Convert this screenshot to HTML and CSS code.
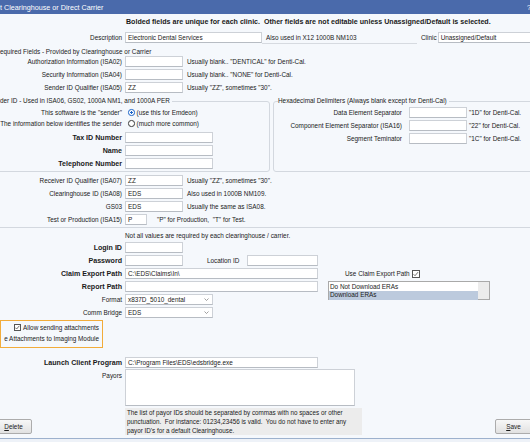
FILE: index.html
```html
<!DOCTYPE html>
<html>
<head>
<meta charset="utf-8">
<link rel="stylesheet" href="styles.css">
</head>
<body>
<div class="dlg">
  <div class="titlebar"><span class="title">t Clearinghouse or Direct Carrier</span><span class="help">?</span></div>

  <div class="headline">Bolded fields are unique for each clinic.&nbsp; Other fields are not editable unless Unassigned/Default is selected.</div>

  <div class="row desc-row">
    <span class="lbl">Description</span>
    <span class="tb w137">Electronic Dental Services</span>
    <span class="also">Also used in X12 1000B NM103</span>
    <span class="clinic-lbl">Clinic</span>
    <span class="tb clinic">Unassigned/Default</span>
  </div>

  <div class="group req">
    <div class="gtitle">equired Fields - Provided by Clearinghouse or Carrier</div>
    <div class="row"><span class="lbl">Authorization Information (ISA02)</span><span class="tb w58"></span><span class="note">Usually blank.. "DENTICAL" for Denti-Cal.</span></div>
    <div class="row"><span class="lbl">Security Information (ISA04)</span><span class="tb w58"></span><span class="note">Usually blank.. "NONE" for Denti-Cal.</span></div>
    <div class="row"><span class="lbl">Sender ID Qualifier (ISA05)</span><span class="tb w58">ZZ</span><span class="note">Usually "ZZ", sometimes "30".</span></div>

    <div class="subgroups">
      <div class="group sender">
        <div class="gtitle">der ID - Used in ISA06, GS02, 1000A NM1, and 1000A PER</div>
        <div class="row r11 first"><span class="lbl">This software is the "sender"</span><span class="radio on"></span><span class="rtext">(use this for Emdeon)</span></div>
        <div class="row r11"><span class="lbl">The information below identifies the sender</span><span class="radio"></span><span class="rtext">(much more common)</span></div>
        <div class="row gap2"><span class="lbl b">Tax ID Number</span><span class="tb w88"></span></div>
        <div class="row"><span class="lbl b">Name</span><span class="tb w88"></span></div>
        <div class="row"><span class="lbl b">Telephone Number</span><span class="tb w88"></span></div>
      </div>
      <div class="group hex">
        <div class="gtitle hextitle">Hexadecimal Delimiters (Always blank except for Denti-Cal)</div>
        <div class="row"><span class="hlbl">Data Element Separator</span><span class="tb w58"></span><span class="hnote">"1D" for Denti-Cal.</span></div>
        <div class="row"><span class="hlbl">Component Element Separator (ISA16)</span><span class="tb w58"></span><span class="hnote">"22" for Denti-Cal.</span></div>
        <div class="row"><span class="hlbl">Segment Teminator</span><span class="tb w58"></span><span class="hnote">"1C" for Denti-Cal.</span></div>
      </div>
    </div>

    <div class="row gap2"><span class="lbl">Receiver ID Qualifier (ISA07)</span><span class="tb w58">ZZ</span><span class="note">Usually "ZZ", sometimes "30".</span></div>
    <div class="row"><span class="lbl">Clearinghouse ID (ISA08)</span><span class="tb w58">EDS</span><span class="note">Also used in 1000B NM109.</span></div>
    <div class="row"><span class="lbl">GS03</span><span class="tb w58">EDS</span><span class="note">Usually the same as ISA08.</span></div>
    <div class="row"><span class="lbl">Test or Production (ISA15)</span><span class="tb w22">P</span><span class="note wide">"P" for Production,&nbsp; "T" for Test.</span></div>
  </div>

  <div class="hint">Not all values are required by each clearinghouse / carrier.</div>

  <div class="conn">
    <div class="conn-left">
      <div class="row"><span class="lbl b">Login ID</span><span class="tb w58"></span></div>
      <div class="row"><span class="lbl b">Password</span><span class="tb w58"></span><span class="loc-lbl">Location ID</span><span class="tb w71"></span></div>
      <div class="row"><span class="lbl b">Claim Export Path</span><span class="tb w193">C:\EDS\Claims\In\</span></div>
      <div class="row"><span class="lbl b">Report Path</span><span class="tb w193"></span></div>
      <div class="row"><span class="lbl">Format</span><span class="tb combo w88"><span class="ctext">x837D_5010_dental</span><svg class="chev" width="5" height="3" viewBox="0 0 5 3"><polyline points="0.5,0.5 2.5,2.5 4.5,0.5" fill="none" stroke="#777" stroke-width="0.7"/></svg></span></div>
      <div class="row"><span class="lbl">Comm Bridge</span><span class="tb combo w88"><span class="ctext">EDS</span><svg class="chev" width="5" height="3" viewBox="0 0 5 3"><polyline points="0.5,0.5 2.5,2.5 4.5,0.5" fill="none" stroke="#777" stroke-width="0.7"/></svg></span></div>
    </div>
    <div class="conn-right">
      <div class="row usepath"><span>Use Claim Export Path</span><span class="chk"><svg width="8" height="8" viewBox="0 0 8 8"><polyline points="1.6,4.2 3.2,5.8 6.4,2" fill="none" stroke="#444" stroke-width="0.8"/></svg></span></div>
      <div class="listbox">
        <div class="items">
          <div class="item">Do Not Download ERAs</div>
          <div class="item sel">Download ERAs</div>
        </div>
        <div class="lscroll"></div>
      </div>
    </div>
  </div>

  <div class="attach">
    <div class="aline"><span class="chk small"><svg width="7" height="7" viewBox="0 0 7 7"><polyline points="1.3,3.6 2.8,5.1 5.7,1.7" fill="none" stroke="#444" stroke-width="0.8"/></svg></span><span>Allow sending attachments</span></div>
    <div class="aline second">e Attachments to Imaging Module</div>
  </div>

  <div class="row launch"><span class="lbl b">Launch Client Program</span><span class="tb w193">C:\Program Files\EDS\edsbridge.exe</span></div>

  <div class="bottom">
    <div class="bcol1">
      <div class="payors-lbl">Payors</div>
      <div class="btn delete"><u>D</u>elete</div>
    </div>
    <div class="bcol2">
      <div class="ta"></div>
      <div class="pnote">The list of payor IDs should be separated by commas with no spaces or other punctuation.&nbsp; For instance: 01234,23456 is valid.&nbsp; You do not have to enter any payor ID's for a default Clearinghouse.</div>
    </div>
    <div class="bspacer"></div>
    <div class="btn save"><u>S</u>ave</div>
  </div>

  <div class="footer"></div>
</div>
</body>
</html>
```

FILE: styles.css
```css
* { box-sizing: border-box; }
html, body { margin: 0; padding: 0; }
body {
  background: #f5f8fc;
  font-family: "Liberation Sans", Arial, sans-serif;
  font-size: 6.4px;
  color: #1a1a1a;
}
.dlg {
  width: 530px;
  height: 442px;
  overflow: hidden;
  display: flex;
  flex-direction: column;
  background: #f5f8fc;
}
.titlebar {
  flex: none;
  height: 14px;
  background: #4a6aab;
  color: #fff;
  font-size: 7.2px;
  display: flex;
  align-items: center;
  justify-content: space-between;
  white-space: nowrap;
}
.help { margin-right: -1px; }
.headline {
  flex: none;
  margin-top: 2px;
  height: 12px;
  line-height: 12px;
  padding-left: 126px;
  font-weight: bold;
  font-size: 7.1px;
  white-space: nowrap;
}
.row {
  display: flex;
  align-items: center;
  height: 13px;
  white-space: nowrap;
  flex: none;
}
.row.r11 { height: 11px; }
.row.first { margin-top: 1px; }
.row.gap2 { margin-top: 2px; }
.lbl {
  flex: none;
  width: 122px;
  margin-right: 3px;
  display: flex;
  justify-content: flex-end;
}
.b { font-weight: bold; font-size: 7.1px; }
.tb {
  flex: none;
  height: 11px;
  background: #fff;
  border: 1px solid #cdd1d7;
  border-bottom-color: #b7bcc3;
  padding: 0 2px;
  display: flex;
  align-items: center;
  overflow: hidden;
  font-size: 6.4px;
  font-weight: normal;
}
.w22 { width: 22px; }
.w58 { width: 58px; }
.w71 { width: 71px; }
.w88 { width: 88px; }
.w137 { width: 137px; }
.w193 { width: 193px; }
.note { margin-left: 4px; }
.note.wide { margin-left: 10px; }

.desc-row { margin-top: 3px; }
.also {
  flex: none;
  width: 155px;
  height: 12px;
  padding-left: 4px;
  margin-top: 1px;
  border-bottom: 1px solid #d6dae0;
  display: flex;
  align-items: center;
}
.clinic-lbl { margin-left: 4px; margin-right: 1px; }
.clinic { width: 100px; }

.group {
  border: 1px solid #d3d8df;
  border-radius: 3px;
}
.gtitle {
  width: max-content;
  height: 10px;
  line-height: 10px;
  margin-top: -6px;
  background: #f5f8fc;
  padding-right: 2px;
  white-space: nowrap;
}
.req {
  flex: none;
  margin: 8px -20px 0 -20px;
  padding: 0 0 1px 19px;
  border-top-color: transparent;
}
.req > .gtitle { margin-bottom: -2px; background: transparent; }

.subgroups {
  display: flex;
  align-items: stretch;
  margin-top: 7px;
}
.sender {
  flex: none;
  margin-left: -20px;
  width: 290px;
  padding: 0 0 1px 19px;
}
.hex {
  flex: 1;
  margin-left: 3px;
  padding-bottom: 1px;
}
.hextitle { margin-left: 4px; padding-left: 0; }
.hlbl {
  flex: none;
  width: 128px;
  margin-right: 7px;
  display: flex;
  justify-content: flex-end;
}
.hnote { margin-left: 2px; }

.radio {
  flex: none;
  width: 6.5px;
  height: 6.5px;
  margin-left: 3px;
  border-radius: 50%;
  border: 0.8px solid #3a3a3a;
  background: #fff;
}
.radio.on {
  border: 1.6px solid #1c64c8;
  background: radial-gradient(circle, #1c64c8 0 1.2px, #fff 1.4px);
}
.rtext { margin-left: 2px; }

.hint {
  flex: none;
  margin-top: 3px;
  height: 10px;
  line-height: 10px;
  padding-left: 125px;
  white-space: nowrap;
}

.conn {
  flex: none;
  display: flex;
}
.conn-left { flex: none; width: 318px; }
.loc-lbl { flex: none; width: 40px; margin-left: 24px; }
.combo { justify-content: space-between; padding-right: 3px; }
.chev { flex: none; }

.conn-right {
  flex: none;
  margin-left: 10px;
  padding-top: 26px;
}
.usepath { padding-left: 17px; }
.chk {
  flex: none;
  width: 8px;
  height: 8px;
  margin-left: 2px;
  border: 0.8px solid #555;
  background: #fff;
  display: flex;
}
.chk svg { display: block; margin: -0.8px; }
.chk.small { width: 7px; height: 7px; margin: 0 2px 0 0; }
.listbox {
  margin-top: 1px;
  width: 162px;
  height: 19px;
  border: 1px solid #a9a9a9;
  background: #fff;
  display: flex;
}
.items { flex: 1; padding-top: 0.5px; }
.item {
  height: 8.5px;
  line-height: 8.5px;
  padding-left: 1px;
  white-space: nowrap;
}
.item.sel { background: #bccadd; }
.lscroll { flex: none; width: 11px; background: #ececec; }

.attach {
  flex: none;
  margin-top: 1px;
  width: 103px;
  height: 28px;
  border: 1px solid #f2ac3a;
  padding-right: 3px;
  display: flex;
  flex-direction: column;
  align-items: flex-end;
}
.aline {
  height: 12px;
  display: flex;
  align-items: center;
  white-space: nowrap;
}
.aline.second { height: 10px; }

.launch { margin-top: 8px; }

.bottom {
  flex: none;
  display: flex;
  height: 66px;
}
.bcol1 {
  flex: none;
  width: 125px;
  display: flex;
  flex-direction: column;
  justify-content: space-between;
  align-items: flex-start;
}
.payors-lbl {
  width: 122px;
  text-align: right;
  padding-top: 3px;
  line-height: 7px;
}
.btn {
  flex: none;
  width: 37px;
  height: 15px;
  border: 1px solid #acacac;
  border-radius: 2px;
  background: linear-gradient(#f7f7f7, #e1e1e1);
  display: flex;
  align-items: center;
  justify-content: center;
  margin-bottom: 1px;
}
.delete { margin-left: -5px; }
.save { align-self: flex-end; margin-right: -2px; }
.bcol2 { flex: none; width: 237px; }
.ta {
  width: 230px;
  height: 37px;
  background: #fff;
  border: 1px solid #cdd1d7;
  border-bottom-color: #b7bcc3;
}
.pnote {
  margin-top: 2px;
  height: 27px;
  background: #ececec;
  padding: 0 2px;
  line-height: 9px;
  font-size: 6.3px;
}
.bspacer { flex: 1; }

.footer {
  flex: none;
  margin-top: 3px;
  height: 10px;
  border-top: 1px solid #9db1cd;
  background: #eef2f8;
}
```
